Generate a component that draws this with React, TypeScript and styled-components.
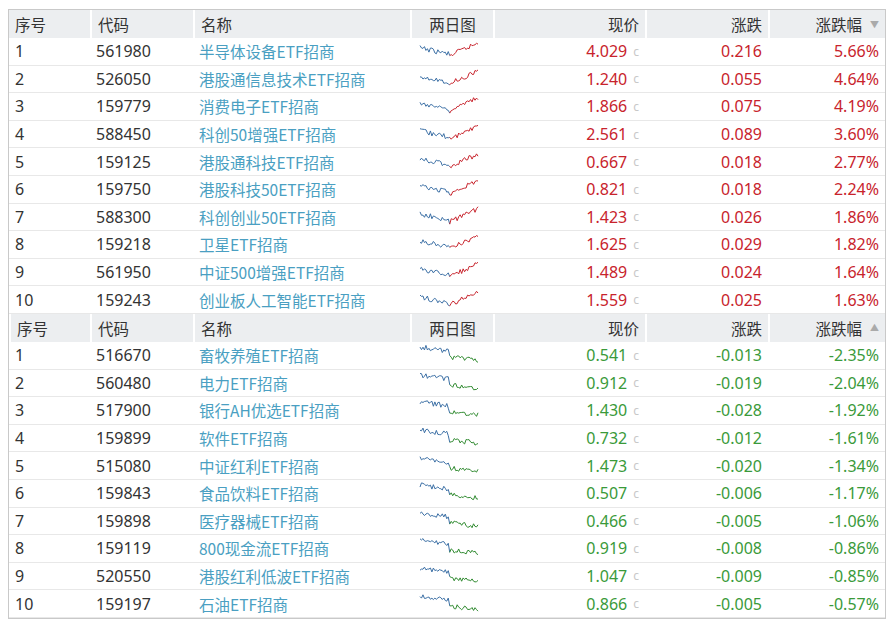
import React from "react";
import styled, { createGlobalStyle } from "styled-components";

const Global = createGlobalStyle`
  body { margin: 0; background: #fff; font-family: "Noto Sans CJK SC", "Noto Sans", sans-serif; }
`;
const Wrap = styled.div`padding: 9px 6px 0 8px;`;
const Table = styled.div`
  border: 1px solid #c9c9c9; width: 876px;
`;
const Grid = styled.div`
  display: grid;
  grid-template-columns: 81px 103px 217px 83px 152px 123px 117px;
`;
const HeadCell = styled.div<{ $align?: string }>`
  height: 28px; background: #eceef0; border-left: 2px solid #fff;
  display: flex; align-items: center; justify-content: ${p => p.$align || "flex-start"};
  padding: 0 6px; font-size: 15.5px; color: #333; box-sizing: border-box;
  &:first-child { border-left: none; }
`;
const Cell = styled.div<{ $color?: string; $align?: string }>`
  height: 27.6px; border-bottom: 1px solid #e8e8e8; box-sizing: border-box;
  display: flex; align-items: center; justify-content: ${p => p.$align || "flex-start"};
  padding: 0 6px; font-size: 16px; color: ${p => p.$color || "#333"};
  font-family: "Noto Sans", "Noto Sans CJK SC", sans-serif; white-space: nowrap;
`;
const Name = styled(Cell)`color: #4a9fc2; font-family: "Noto Sans CJK SC", sans-serif; font-size: 15.5px;`;
const C = styled.span`color: #c8c8c8; font-size: 12px; margin-left: 6px;`;
const Arrow = styled.span`color: #aaa; font-size: 9px; margin-left: 8px;`;

const up = [
  ["561980","半导体设备ETF招商","4.029","0.216","5.66%"],
  ["526050","港股通信息技术ETF招商","1.240","0.055","4.64%"],
  ["159779","消费电子ETF招商","1.866","0.075","4.19%"],
  ["588450","科创50增强ETF招商","2.561","0.089","3.60%"],
  ["159125","港股通科技ETF招商","0.667","0.018","2.77%"],
  ["159750","港股科技50ETF招商","0.821","0.018","2.24%"],
  ["588300","科创创业50ETF招商","1.423","0.026","1.86%"],
  ["159218","卫星ETF招商","1.625","0.029","1.82%"],
  ["561950","中证500增强ETF招商","1.489","0.024","1.64%"],
  ["159243","创业板人工智能ETF招商","1.559","0.025","1.63%"],
];
const down = [
  ["516670","畜牧养殖ETF招商","0.541","-0.013","-2.35%"],
  ["560480","电力ETF招商","0.912","-0.019","-2.04%"],
  ["517900","银行AH优选ETF招商","1.430","-0.028","-1.92%"],
  ["159899","软件ETF招商","0.732","-0.012","-1.61%"],
  ["515080","中证红利ETF招商","1.473","-0.020","-1.34%"],
  ["159843","食品饮料ETF招商","0.507","-0.006","-1.17%"],
  ["159898","医疗器械ETF招商","0.466","-0.005","-1.06%"],
  ["159119","800现金流ETF招商","0.919","-0.008","-0.86%"],
  ["520550","港股红利低波ETF招商","1.047","-0.009","-0.85%"],
  ["159197","石油ETF招商","0.866","-0.005","-0.57%"],
];

function rnd(seed: number) { let s = seed; return () => { s = (s * 9301 + 49297) % 233280; return s / 233280; }; }

function Spark({ seed, rising }: { seed: number; rising: boolean }) {
  const r = rnd(seed * 17 + (rising ? 3 : 91));
  const n = 40; const pts: [number, number][] = [];
  for (let i = 0; i < n; i++) {
    const t = i / (n - 1);
    let base: number;
    if (rising) base = t < 0.5 ? 8 + t * 12 : 16 - (t - 0.5) * 26;
    else base = t < 0.5 ? 3 + t * 8 : 13 + (t - 0.5) * 6;
    pts.push([4 + t * 58, base + (r() - 0.5) * 5]);
  }
  const a = pts.slice(0, 21).map(p => p.join(",")).join(" ");
  const b = pts.slice(20).map(p => p.join(",")).join(" ");
  return (
    <svg width="66" height="22" viewBox="0 0 66 22">
      <polyline points={a} fill="none" stroke="#3b6fa5" strokeWidth="1" />
      <polyline points={b} fill="none" stroke={rising ? "#c8232c" : "#2f8a2f"} strokeWidth="1" />
    </svg>
  );
}

function Section({ rows, rising }: { rows: string[][]; rising: boolean }) {
  const col = rising ? "#c8232c" : "#3a9a3a";
  return (
    <>
      <HeadCell>序号</HeadCell>
      <HeadCell>代码</HeadCell>
      <HeadCell>名称</HeadCell>
      <HeadCell $align="center">两日图</HeadCell>
      <HeadCell $align="flex-end">现价</HeadCell>
      <HeadCell $align="flex-end">涨跌</HeadCell>
      <HeadCell $align="flex-end">涨跌幅<Arrow>{rising ? "▼" : "▲"}</Arrow></HeadCell>
      {rows.map((r, i) => (
        <React.Fragment key={i}>
          <Cell>{i + 1}</Cell>
          <Cell>{r[0]}</Cell>
          <Name>{r[1]}</Name>
          <Cell $align="flex-start"><Spark seed={i + 1} rising={rising} /></Cell>
          <Cell $align="flex-end" $color={col}>{r[2]}<C>c</C></Cell>
          <Cell $align="flex-end" $color={col}>{r[3]}</Cell>
          <Cell $align="flex-end" $color={col}>{r[4]}</Cell>
        </React.Fragment>
      ))}
    </>
  );
}

export default function App() {
  return (
    <Wrap>
      <Global />
      <Table>
        <Grid>
          <Section rows={up} rising />
          <Section rows={down} rising={false} />
        </Grid>
      </Table>
    </Wrap>
  );
}
